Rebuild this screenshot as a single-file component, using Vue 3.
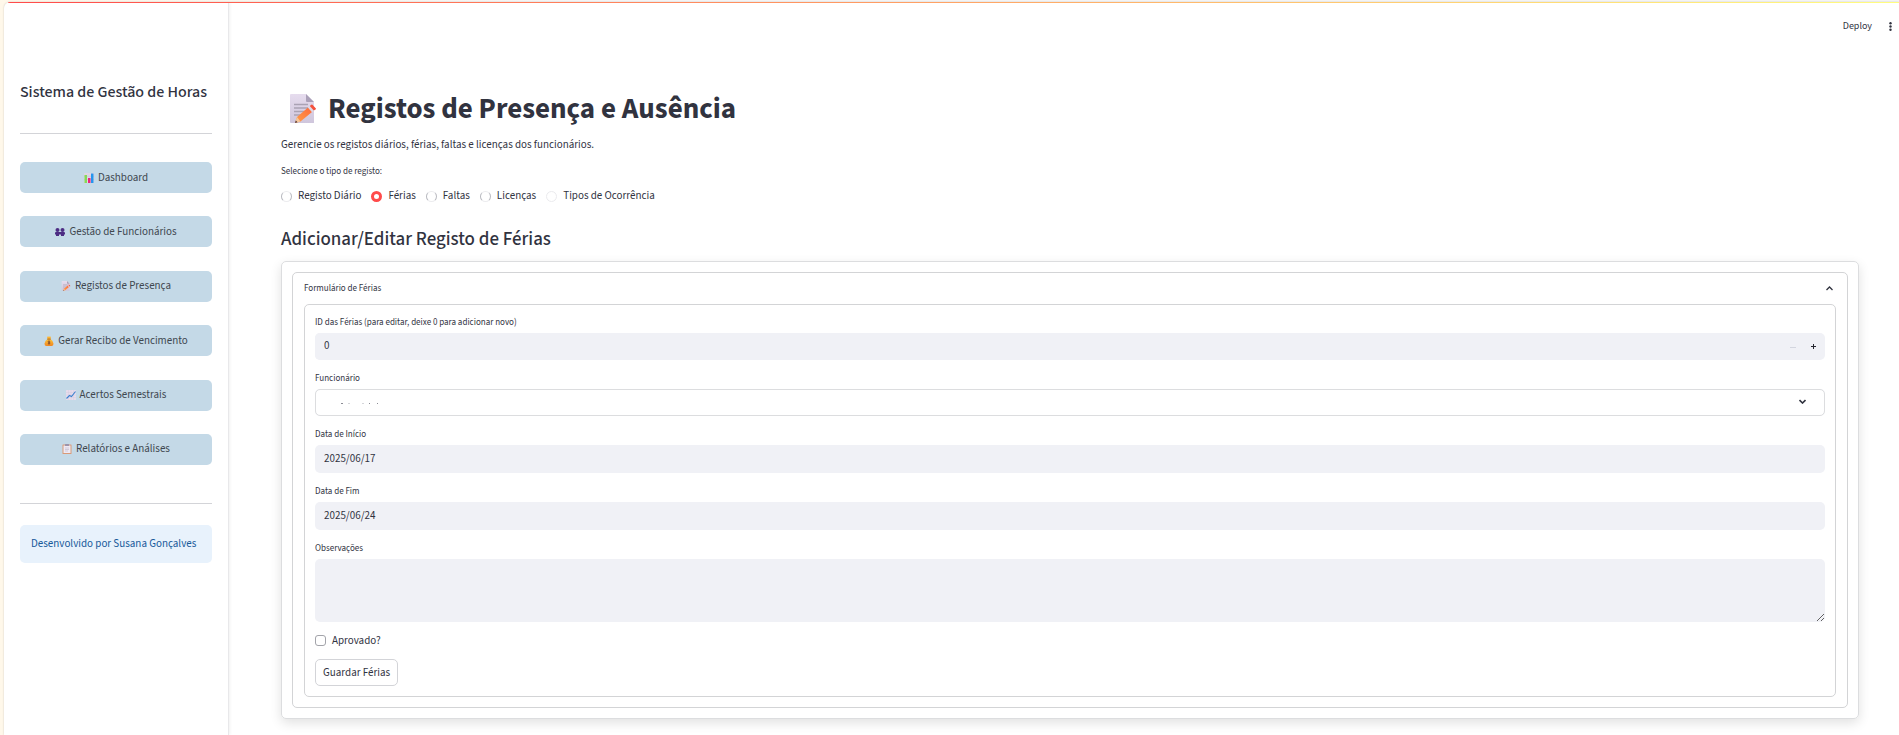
<script setup>
import { ref } from 'vue'

const nav = [
  { icon: 'chart', text: 'Dashboard' },
  { icon: 'people', text: 'Gestão de Funcionários' },
  { icon: 'memo', text: 'Registos de Presença' },
  { icon: 'money', text: 'Gerar Recibo de Vencimento' },
  { icon: 'trend', text: 'Acertos Semestrais' },
  { icon: 'clipboard', text: 'Relatórios e Análises' },
]
const types = ['Registo Diário', 'Férias', 'Faltas', 'Licenças', 'Tipos de Ocorrência']
const type = ref('Férias')
const id = ref(0)
const start = ref('2025/06/17')
const end = ref('2025/06/24')
const notes = ref('')
const approved = ref(false)
const open = ref(true)
</script>

<template>
  <div class="page">
    <svg class="defs" aria-hidden="true">
      <defs>
        <linearGradient id="paper" x1="0" y1="0" x2="0" y2="1">
          <stop offset="0" stop-color="#e6dcee" />
          <stop offset="1" stop-color="#cfc6dc" />
        </linearGradient>
        <linearGradient id="pencil" x1="1" y1="0" x2="0" y2="1">
          <stop offset="0" stop-color="#ff6a3c" />
          <stop offset="1" stop-color="#ffa14a" />
        </linearGradient>
        <linearGradient id="gold" x1="0" y1="0" x2="0" y2="1">
          <stop offset="0" stop-color="#ffc83a" />
          <stop offset="1" stop-color="#ef8420" />
        </linearGradient>
        <symbol id="memo" viewBox="0 0 26 30">
          <path d="M1 0h15l8 8v21H1a1 1 0 0 1-1-1V1a1 1 0 0 1 1-1z" fill="url(#paper)" />
          <path d="M16 0l8 8h-7a1 1 0 0 1-1-1z" fill="#aaa0b8" />
          <path d="M4 10.500h14M4 14h14M4 17.500h11M4 21h8" stroke="#aaa2b4" stroke-width="1.300" />
          <path d="M5 29l2-6L18 13.500l4 4.500L10.500 27.500z" fill="url(#pencil)" />
          <path d="M5 29l2-6 3.500 4.500z" fill="#f6c79a" />
          <path d="M5 29l.8-2.400 1.700 1.600z" fill="#47313b" />
          <path d="M18 13.500l1.800-1.500 4 4.500L22 18z" fill="#ded9e6" />
          <path d="M19.800 12l1.500-1.200a1 1 0 0 1 1.400.1l3 3.300a1 1 0 0 1-.1 1.400L23.800 16.500z" fill="#f4513c" />
        </symbol>
        <symbol id="chart" viewBox="0 0 20 20">
          <rect width="20" height="20" rx="1" fill="#ded5e6" />
          <path d="M0 6.500h20M0 13h20" stroke="#c4bccf" />
          <rect x="1" y="4" width="5" height="16" fill="#86d957" />
          <rect x="8" y="10" width="5" height="10" fill="#ed247e" />
          <rect x="14" y="1" width="5" height="19" fill="#2496ed" />
        </symbol>
        <symbol id="people" viewBox="0 0 20 20">
          <circle cx="5" cy="6" r="4" fill="#4c2c83" />
          <circle cx="15" cy="6" r="4" fill="#4c2c83" />
          <path d="M0 15v-3q0-2 2-2h16q2 0 2 2v3h-2v3h-6v-3H8v3H2v-3z" fill="#4c2c83" />
        </symbol>
        <symbol id="money" viewBox="0 0 20 20">
          <path d="M7 6L6 1l2.500 1L10 0l1.500 2L14 1l-1 5z" fill="#ffb52e" />
          <path d="M7 6h6q6 4 6 9.500 0 4.500-4 4.500H5q-4 0-4-4.500Q1 10 7 6z" fill="url(#gold)" />
          <path d="M6.500 6.200h7" stroke="#9c5624" stroke-width="1.700" />
          <path d="M12.300 10.800q-4.300-1.500-4.300.7t4 1.700q1.500 3-4.300 2M10 9v8.500" fill="none" stroke="#74432f" stroke-width="1.300" />
        </symbol>
        <symbol id="trend" viewBox="0 0 20 20">
          <rect width="20" height="20" rx="1" fill="#e6dcec" />
          <path d="M5 0v20M10 0v20M15 0v20M0 5h20M0 10h20M0 15h20" stroke="#d2c9dc" stroke-width=".7" />
          <path d="M1 17l6-6 4 2 8-10" fill="none" stroke="#3a80d0" stroke-width="2.200" />
        </symbol>
        <symbol id="clipboard" viewBox="0 0 20 20">
          <rect x="1" y="1" width="18" height="19" rx="1" fill="#d99a78" />
          <rect x="3" y="3" width="14" height="15" fill="#eee9f4" />
          <rect x="6" y="0" width="8" height="4" rx="1" fill="#9b93ab" />
          <path d="M6 8h8M6 11h8M6 14h6" stroke="#b4acc0" />
        </symbol>
      </defs>
    </svg>

    <div class="app">
      <aside class="sidebar">
        <h2 class="brand">Sistema de Gestão de Horas</h2>
        <hr class="rule" />
        <nav class="nav">
          <button v-for="n in nav" :key="n.text" type="button" class="nav-btn">
            <svg class="nav-icon" aria-hidden="true"><use :href="'#' + n.icon" /></svg>
            <span>{{ n.text }}</span>
          </button>
        </nav>
        <hr class="rule" />
        <p class="info">Desenvolvido por Susana Gonçalves</p>
      </aside>

      <div class="content">
        <header class="toolbar">
          <button type="button" class="deploy">Deploy</button>
          <button type="button" class="more" aria-label="Menu">
            <svg width="3" height="9" viewBox="0 0 3 9" fill="#31333f">
              <circle cx="1.500" cy="1.200" r="1.200" /><circle cx="1.500" cy="4.500" r="1.200" /><circle cx="1.500" cy="7.800" r="1.200" />
            </svg>
          </button>
        </header>

        <main class="main">
          <h1 class="title">
            <svg class="title-icon" aria-hidden="true"><use href="#memo" /></svg>
            <span>Registos de Presença e Ausência</span>
          </h1>
          <p class="lead">Gerencie os registos diários, férias, faltas e licenças dos funcionários.</p>

          <fieldset class="types">
            <legend class="label">Selecione o tipo de registo:</legend>
            <div class="radios">
              <label v-for="(t, i) in types" :key="t" class="radio">
                <input v-model="type" type="radio" name="type" :value="t" :class="{ faint: i === 4 }" />
                <span>{{ t }}</span>
              </label>
            </div>
          </fieldset>

          <h2 class="subtitle">Adicionar/Editar Registo de Férias</h2>

          <section class="card">
            <div class="expander">
              <button type="button" class="summary" :aria-expanded="open" @click="open = !open">
                <span>Formulário de Férias</span>
                <svg width="7" height="5" viewBox="0 0 7 5" fill="none" stroke="#31333f" stroke-width="1.300"><path d="M.5 4l3-3 3 3" /></svg>
              </button>
              <form v-show="open" class="form" @submit.prevent>
                <div class="field">
                  <label class="label" for="fid">ID das Férias (para editar, deixe 0 para adicionar novo)</label>
                  <div class="number">
                    <input id="fid" v-model="id" type="text" inputmode="numeric" class="input" />
                    <button type="button" class="step" aria-label="Diminuir" disabled>
                      <svg width="6" height="6" viewBox="0 0 6 6" stroke="#d3d6df"><path d="M0 3.500h6" /></svg>
                    </button>
                    <button type="button" class="step" aria-label="Aumentar" @click="id++">
                      <svg width="5" height="5" viewBox="0 0 5 5" stroke="#262730"><path d="M0 2.500h5M2.500 0v5" /></svg>
                    </button>
                  </div>
                </div>
                <div class="field">
                  <label class="label" for="emp">Funcionário</label>
                  <div class="select-wrap">
                    <select id="emp" class="select"><option value=""></option></select>
                    <svg class="marks" width="40" height="2" viewBox="0 0 40 2" aria-hidden="true">
                      <path d="M1 .5h2M29 .5h1M37 .5h1" stroke="#8b8c94" />
                      <path d="M8 .5h2M22 .5h2" stroke="#d5d6da" />
                    </svg>
                    <svg class="chevron" width="7" height="5" viewBox="0 0 7 5" fill="none" stroke="#31333f" stroke-width="1.600" aria-hidden="true"><path d="M.5 1l3 3 3-3" /></svg>
                  </div>
                </div>
                <div class="field">
                  <label class="label" for="start">Data de Início</label>
                  <input id="start" v-model="start" type="text" class="input date" />
                </div>
                <div class="field">
                  <label class="label" for="end">Data de Fim</label>
                  <input id="end" v-model="end" type="text" class="input date" />
                </div>
                <div class="field">
                  <label class="label" for="notes">Observações</label>
                  <textarea id="notes" v-model="notes" class="area"></textarea>
                </div>
                <label class="check">
                  <input v-model="approved" type="checkbox" />
                  <span>Aprovado?</span>
                </label>
                <button type="submit" class="save">Guardar Férias</button>
              </form>
            </div>
          </section>
        </main>
      </div>
    </div>
  </div>
</template>

<style>
body {
  margin: 0;
  background: linear-gradient(90deg, #fff8ea, #f6f6f6 30%);
}
</style>

<style scoped>
.page,
.page * {
  box-sizing: border-box;
}
.page {
  min-height: 100vh;
  padding: 2px 0 0 4px;
  display: flex;
  font-family: "Source Sans 3", "Source Sans Pro", "Noto Sans CJK SC", "Noto Sans", sans-serif;
  font-size: 11px;
  line-height: 16px;
  color: #31333f;
}
.defs {
  position: absolute;
  width: 0;
  height: 0;
}
button,
input,
select,
textarea {
  font: inherit;
  color: inherit;
  margin: 0;
}
button {
  cursor: pointer;
}
.app {
  position: relative;
  flex: 1;
  display: flex;
  background: #fff;
  border-radius: 6px 0 0 0;
  overflow: hidden;
  box-shadow: 0 0 2px rgba(0, 0, 0, 0.2);
}
.app::before {
  content: "";
  position: absolute;
  inset: 0 0 auto 4px;
  height: 1px;
  background: linear-gradient(90deg, #ff4b4b, #fffd80);
}
.sidebar {
  width: 225px;
  flex: none;
  padding: 80px 16px 0;
  border-right: 1px solid #e8e8ea;
  box-shadow: 1px 0 3px rgba(0, 0, 0, 0.06);
}
.brand {
  margin: 0;
  font-size: 16px;
  line-height: 20px;
  font-weight: 500;
  white-space: nowrap;
}
.rule {
  height: 1px;
  margin: 31px 0 28px;
  border: 0;
  background: #d3d4d8;
}
.nav {
  height: 303px;
  display: flex;
  flex-direction: column;
  justify-content: space-between;
}
.nav-btn {
  height: 31px;
  padding: 0;
  border: 0;
  border-radius: 5px;
  background: #c4d9e7;
  color: #40474f;
  display: flex;
  align-items: center;
  justify-content: center;
  gap: 4px;
}
.nav-icon {
  width: 10px;
  height: 10px;
}
.nav + .rule {
  margin: 38px 0 21px;
}
.info {
  margin: 0;
  padding: 11px;
  border-radius: 5px;
  background: #e8f2fc;
  color: #17599a;
}
.content {
  flex: 1;
  min-width: 0;
}
.toolbar {
  height: 48px;
  padding: 0 7px 0 0;
  display: flex;
  align-items: center;
  justify-content: flex-end;
  gap: 17px;
}
.deploy,
.more {
  border: 0;
  padding: 0;
  background: none;
  font-size: 10px;
}
.more {
  display: flex;
}
.main {
  padding: 39px 40px 16px 52px;
}
.title {
  margin: 0;
  padding-left: 9px;
  display: flex;
  align-items: center;
  gap: 12px;
  font-size: 29px;
  line-height: 40px;
  font-weight: 700;
}
.title-icon {
  width: 26px;
  height: 30px;
}
.lead {
  margin: 8px 0 11px;
}
.types {
  margin: 0;
  padding: 0;
  border: 0;
}
.label {
  display: block;
  padding: 0;
  font-size: 9px;
  line-height: 16px;
}
.radios {
  display: flex;
  gap: 10px;
  margin-top: 8px;
}
.radio,
.check {
  display: flex;
  align-items: center;
  gap: 6px;
}
.radio input {
  appearance: none;
  width: 11px;
  height: 11px;
  border: 1px solid #b9bac0;
  border-top-color: #ececef;
  border-bottom-color: #ececef;
  border-radius: 50%;
}
.radio input.faint {
  border-color: #ebebee;
}
.radio input:checked {
  border: 3px solid #ff4b4b;
  background: #fff;
}
.subtitle {
  margin: 23px 0 8px;
  font-size: 19px;
  line-height: 26px;
  font-weight: 500;
}
.card {
  padding: 10px;
  border: 1px solid #dcdddf;
  border-radius: 5px;
  box-shadow: 0 4px 12px rgba(0, 0, 0, 0.12);
}
.expander {
  padding: 0 11px 10px;
  border: 1px solid #d3d4d6;
  border-radius: 5px;
}
.summary {
  width: 100%;
  height: 31px;
  padding: 0 3px 0 0;
  border: 0;
  background: none;
  display: flex;
  align-items: center;
  justify-content: space-between;
  font-size: 9px;
}
.form {
  padding: 10px;
  border: 1px solid #d3d4d6;
  border-radius: 5px;
  display: flex;
  flex-direction: column;
  gap: 11px;
}
.field {
  display: flex;
  flex-direction: column;
  gap: 2px;
}
.number,
.select-wrap {
  position: relative;
  display: flex;
  height: 27px;
  border-radius: 5px;
  background: #f0f1f6;
}
.number {
  padding-right: 1px;
}
.input {
  flex: 1;
  min-width: 0;
  border: 0;
  border-radius: 5px;
  padding: 0 9px 2px;
  background: #f0f1f6;
}
.input.date {
  flex: none;
  height: 28px;
}
.step {
  width: 21px;
  padding: 0;
  border: 0;
  background: none;
  display: flex;
  align-items: center;
  justify-content: center;
}
.select {
  appearance: none;
  width: 100%;
  padding: 0 9px;
  border: 1px solid #dcdddf;
  border-radius: 5px;
  background: #fff;
}
.marks {
  position: absolute;
  left: 25px;
  top: 14px;
}
.chevron {
  position: absolute;
  right: 19px;
  top: 10px;
}
.area {
  width: 100%;
  height: 63px;
  padding: 8px 9px;
  border: 0;
  border-radius: 5px;
  background: #f0f1f6;
  resize: vertical;
}
.check {
  height: 15px;
}
.check input {
  appearance: none;
  width: 11px;
  height: 11px;
  border: 1px solid #a3a4aa;
  border-radius: 3px;
}
.save {
  align-self: flex-start;
  height: 27px;
  padding: 0 7px;
  border: 1px solid #d3d4d8;
  border-radius: 5px;
  background: #fff;
}
</style>
